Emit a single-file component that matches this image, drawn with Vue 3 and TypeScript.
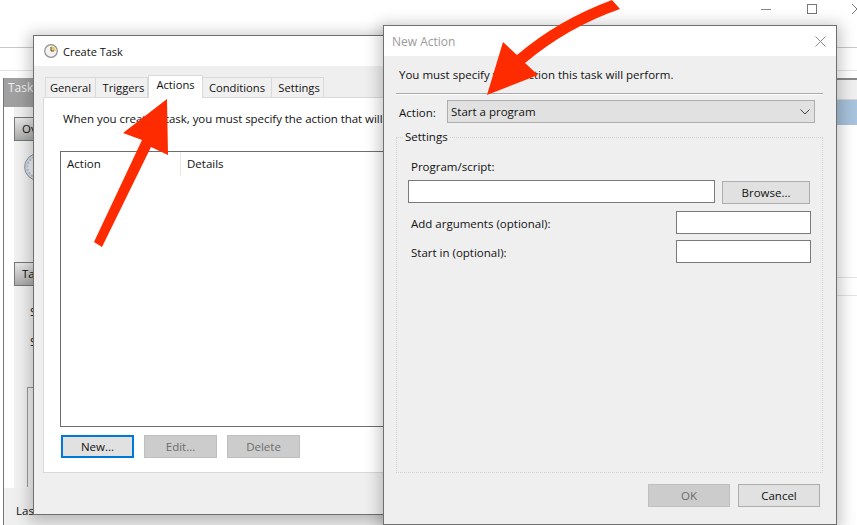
<script setup lang="ts">
const tabs: string[] = ['General', 'Triggers', 'Actions', 'Conditions', 'Settings']
</script>

<template>
  <div class="desktop">
    <div class="app">
      <div class="app-title">
        <span class="ctl-min"></span>
        <span class="ctl-max"></span>
        <svg class="ctl-close" width="10" height="10" viewBox="0 0 10 10"><path d="M0 0L10 10M10 0L0 10" stroke="#777" fill="none" /></svg>
      </div>
      <div class="app-menu"></div>
      <div class="panes">
        <div class="left-pane">
          <div class="pane-head">Task S</div>
          <div class="pane-body">
            <div class="sect-btn">Ov</div>
            <svg class="big-clock" width="28" height="28" viewBox="0 0 28 28">
              <circle cx="14" cy="14" r="13.4" fill="#d5dde6" stroke="#8f959c" />
              <circle cx="14" cy="14" r="10.5" fill="#eef2f6" stroke="#b9c6d6" stroke-width="2" stroke-dasharray="2 1.6" />
            </svg>
            <div class="sect-btn second">Tas</div>
            <div class="pane-line first">S</div>
            <div class="pane-line">S</div>
            <div class="pane-box"></div>
          </div>
          <div class="pane-foot">Last run ended on 4/3/2020 7:43:05 AM</div>
        </div>
        <div class="right-pane">
          <div class="right-head"></div>
          <div class="right-sel"></div>
          <div class="right-row">n</div>
        </div>
      </div>
    </div>

    <section class="win create">
      <header class="title">
        <svg width="14" height="14" viewBox="0 0 14 14">
          <circle cx="7" cy="7" r="6.3" fill="#f4f2ea" stroke="#8d9094" stroke-width="1.2" />
          <path d="M7 7L7 2.2A4.8 4.8 0 0 1 11.8 7Z" fill="#eec866" />
          <path d="M7 3V7H10" fill="none" stroke="#555" stroke-width="1" />
        </svg>
        <span class="create-name">Create Task</span>
      </header>
      <div class="create-body">
        <nav class="tabs">
          <span v-for="t in tabs" :key="t" class="tab" :class="[t.toLowerCase(), { active: t === 'Actions' }]">{{ t }}</span>
        </nav>
        <div class="panel">
          <p class="intro">When you create a task, you must specify the action that will</p>
          <div class="list">
            <div class="list-head">
              <span class="col-action">Action</span>
              <span class="col-details">Details</span>
            </div>
          </div>
          <div class="list-btns">
            <button class="btn focus">New...</button>
            <button class="btn off">Edit...</button>
            <button class="btn off">Delete</button>
          </div>
        </div>
      </div>
    </section>

    <section class="win action">
      <header class="title dim">
        <span>New Action</span>
        <svg class="x" width="11" height="11" viewBox="0 0 11 11"><path d="M0.5 0.5L10.5 10.5M10.5 0.5L0.5 10.5" stroke="#8a8a8a" fill="none" /></svg>
      </header>
      <div class="action-body">
        <p class="must">You must specify what action this task will perform.</p>
        <div class="rule"></div>
        <div class="action-row">
          <label>Action:</label>
          <div class="select">
            <span>Start a program</span>
            <svg width="10" height="6" viewBox="0 0 10 6"><path d="M0.5 0.5L5 5L9.5 0.5" fill="none" stroke="#444" /></svg>
          </div>
        </div>
        <div class="fieldset">
          <span class="legend">Settings</span>
          <label class="prog-label">Program/script:</label>
          <div class="prog-row">
            <div class="input wide"></div>
            <button class="btn browse">Browse...</button>
          </div>
          <div class="arg-row args"><label>Add arguments (optional):</label><div class="input small"></div></div>
          <div class="arg-row"><label>Start in (optional):</label><div class="input small"></div></div>
        </div>
        <div class="foot">
          <button class="btn ok off">OK</button>
          <button class="btn cancel">Cancel</button>
        </div>
      </div>
    </section>

    <svg class="arrows" width="857" height="525" viewBox="0 0 857 525">
      <path d="M94 242L142 140L123 133L167 99L168 155L151 147L102 247Z" fill="#ff2b00" />
      <path d="M612 0L620 9Q568 27 525 63L538 75L487 95L503 42L517 55Q558 20 612 0Z" fill="#ff2b00" />
    </svg>
  </div>
</template>

<style>
html, body { margin: 0; padding: 0; background: #fff; }
</style>

<style scoped>
.desktop {
  position: relative;
  width: 857px;
  height: 525px;
  overflow: hidden;
  background: #fff;
  font-family: "Open Sans", "Liberation Sans", sans-serif;
  font-size: 11.5px;
  color: #111;
}
.app { display: flex; flex-direction: column; width: 857px; height: 525px; }
.app-title {
  height: 47px;
  border-bottom: 1px solid #c8c8c8;
  position: relative;
}
.ctl-min { position: absolute; left: 761px; top: 9px; width: 10px; height: 1px; background: #888; }
.ctl-max { position: absolute; left: 807px; top: 4px; width: 8px; height: 8px; border: 1px solid #777; }
.ctl-close { position: absolute; left: 852px; top: 4px; }
.app-menu { height: 22px; border-bottom: 1px solid #e2e2e2; }
.panes { flex: 1; display: flex; padding: 7px 0 0 3px; min-height: 0; }
.left-pane {
  width: 600px;
  border-left: 1px solid #777;
  display: flex;
  flex-direction: column;
}
.pane-head {
  width: 30px;
  height: 29px;
  overflow: hidden;
  white-space: nowrap;
  background: #a0a0a0;
  color: #f0f0f0;
  padding: 1px 0 0 4px;
  box-sizing: border-box;
  font-size: 12px;
}
.pane-body {
  width: 30px;
  overflow: hidden;
  flex: 1;
  padding: 10px 0 0 10px;
  box-sizing: border-box;
  background: linear-gradient(to right, #fff 10px, #f1f1f1 10px);
  min-height: 0;
}
.sect-btn {
  width: 60px;
  height: 24px;
  box-sizing: border-box;
  border: 1px solid #777;
  background: linear-gradient(#e9e9e9, #a9a9a9);
  padding: 3px 0 0 7px;
  white-space: nowrap;
}
.sect-btn.second { margin-top: 81px; }
.big-clock { display: block; margin: 12px 0 0 10px; }
.pane-line { margin: 15px 0 0 16px; line-height: 15px; white-space: nowrap; }
.pane-line.first { margin-top: 18px; }
.pane-box { margin: 38px 0 0 13px; width: 60px; height: 100px; border: 1px solid #999; border-bottom: 0; box-sizing: border-box; }
.pane-foot {
  height: 37px;
  padding: 15px 0 0 12px;
  box-sizing: border-box;
  background: #efefef;
  white-space: nowrap;
}
.right-pane { flex: 1; }
.right-head {
  height: 22px;
  box-sizing: border-box;
  border-top: 2px solid #888;
  border-bottom: 1px solid #d4d4d4;
  background: #f0f0f0;
}
.right-sel { height: 25px; background: linear-gradient(100deg, #8db0d2, #a9c3dc); }
.right-row {
  margin-top: 152px;
  height: 17px;
  border-top: 1px solid #e4e4e4;
  border-bottom: 1px solid #e4e4e4;
  text-align: right;
  padding-right: 20px;
  line-height: 16px;
}

.win {
  position: absolute;
  display: flex;
  flex-direction: column;
  box-sizing: border-box;
  background: #efefef;
  border: 1px solid #6f6f6f;
  box-shadow: 0 3px 14px 4px rgba(0, 0, 0, 0.22);
}
.create { left: 33px; top: 35px; width: 360px; height: 480px; }
.action { left: 383px; top: 25px; width: 454px; height: 500px; }
.title {
  height: 30px;
  flex: none;
  background: #fff;
  display: flex;
  align-items: center;
  box-sizing: border-box;
  padding-left: 10px;
  gap: 5px;
  font-size: 12px;
}
.create-name { font-size: 11px; }
.title.dim { color: #9b9b9b; padding-left: 8px; justify-content: space-between; padding-right: 10px; }
.create-body { padding: 11px 0 0 9px; flex: 1; display: flex; flex-direction: column; }
.tabs { display: flex; align-items: flex-end; height: 20px; padding-left: 2px; position: relative; z-index: 1; }
.tab {
  box-sizing: border-box;
  height: 20px;
  background: #f0f0f0;
  border: 1px solid #d9d9d9;
  border-left: 0;
  border-bottom: 0;
  display: flex;
  align-items: center;
  justify-content: center;
  white-space: nowrap;
  font-size: 11.2px;
}
.tab.general { width: 51px; border-left: 1px solid #d9d9d9; }
.tab.triggers { width: 52px; padding-left: 4px; }
.tab.actions { width: 55px; }
.tab.conditions { width: 69px; }
.tab.settings { width: 52px; padding-left: 3px; }
.tab.active {
  height: 23px;
  margin-bottom: -1px;
  background: #fff;
  border-left: 1px solid #d9d9d9;
  padding-bottom: 5px;
}
.panel {
  box-sizing: border-box;
  height: 376px;
  background: #fff;
  border: 1px solid #d9d9d9;
  padding: 13px 0 0 19px;
  white-space: nowrap;
}
.intro { margin: 0; line-height: 16px; letter-spacing: -0.05px; }
.list {
  box-sizing: border-box;
  width: 340px;
  height: 276px;
  margin: 24px 0 0 -3px;
  border: 1px solid #6d6d6d;
  border-right: 0;
}
.list-head { display: flex; height: 24px; line-height: 24px; }
.col-action { width: 120px; padding-left: 6px; border-right: 1px solid #e6e6e6; box-sizing: border-box; }
.col-details { padding-left: 6px; }
.list-btns { display: flex; gap: 10px; margin: 8px 0 0 -2px; }
.btn {
  width: 73px;
  height: 23px;
  box-sizing: border-box;
  padding: 0;
  font: inherit;
  color: #111;
  background: #e1e1e1;
  border: 1px solid #adadad;
}
.btn.focus { border: 2px solid #0078d7; }
.btn.off { background: #cccccc; border-color: #bfbfbf; color: #6d6d6d; }
.action-body { flex: 1; padding: 11px 13px 0 12px; display: flex; flex-direction: column; }
.must { margin: 0 0 0 3px; line-height: 16px; white-space: nowrap; }
.rule { height: 1px; margin-top: 10px; background: #a8a8a8; border-bottom: 1px solid #fff; }
.action-row { display: flex; align-items: center; margin-top: 5px; padding-left: 3px; height: 23px; }
.action-row label { width: 48px; margin-top: 2px; }
.select {
  box-sizing: border-box;
  width: 368px;
  height: 23px;
  background: #e1e1e1;
  border: 1px solid #adadad;
  display: flex;
  align-items: center;
  justify-content: space-between;
  padding: 0 4px 0 3px;
}
.fieldset {
  position: relative;
  box-sizing: border-box;
  height: 336px;
  margin-top: 14px;
  border: 1px dotted #d2d2d2;
  padding: 21px 0 0 11px;
}
.legend { position: absolute; left: 7px; top: -9px; background: #efefef; padding: 0 1px; line-height: 16px; }
.prog-label { display: block; margin-left: 3px; line-height: 16px; }
.prog-row { display: flex; gap: 7px; align-items: flex-start; margin-top: 5px; }
.input { box-sizing: border-box; height: 23px; background: #fff; border: 1px solid #7a7a7a; }
.input.wide { width: 307px; }
.input.small { width: 135px; }
.browse { width: 88px; margin-top: 1px; }
.arg-row { display: flex; justify-content: space-between; align-items: center; height: 23px; margin-top: 6px; padding: 0 11px 0 3px; }
.arg-row label { margin-top: 2px; }
.arg-row.args { margin-top: 7px; }
.foot { display: flex; justify-content: flex-end; gap: 8px; margin-top: 11px; padding-right: 3px; }
.ok, .cancel { width: 82px; }
.x { flex: none; }
.arrows { position: absolute; left: 0; top: 0; pointer-events: none; }
</style>
